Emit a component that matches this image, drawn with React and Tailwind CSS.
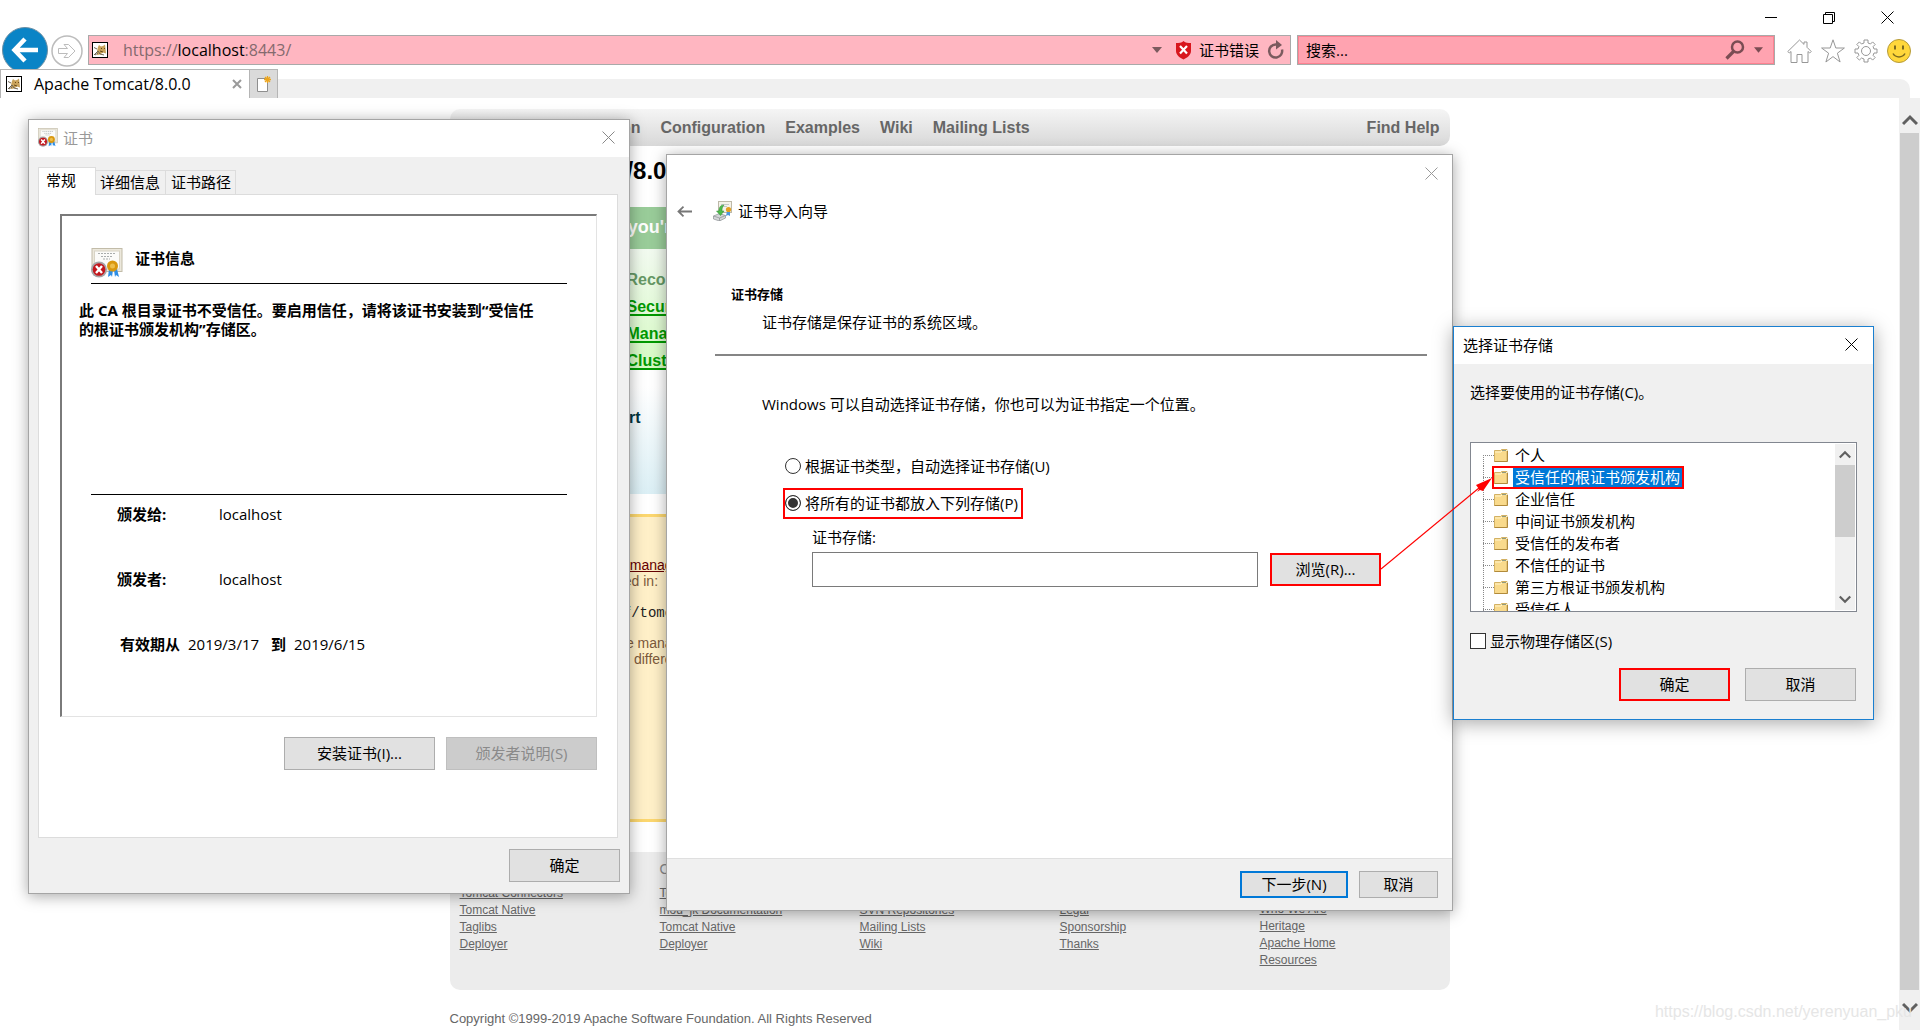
const uiFont = "font-['Open_Sans','Noto_Sans_CJK_SC',sans-serif]";
const pageFont = "font-['Liberation_Sans',sans-serif]";

const stores = [
    '个人',
    '受信任的根证书颁发机构',
    '企业信任',
    '中间证书颁发机构',
    '受信任的发布者',
    '不信任的证书',
    '第三方根证书颁发机构',
    '受信任人',
];

const footerColumns = [
    { title: 'Other Downloads', links: ['Tomcat Connectors', 'Tomcat Native', 'Taglibs', 'Deployer'] },
    { title: 'Other Documentation', links: ['Tomcat Connectors', 'mod_jk Documentation', 'Tomcat Native', 'Deployer'] },
    { title: 'Get Involved', links: ['Overview', 'SVN Repositories', 'Mailing Lists', 'Wiki'] },
    { title: 'Miscellaneous', links: ['Contact', 'Legal', 'Sponsorship', 'Thanks'] },
    { title: 'Apache Software Foundation', links: ['Who We Are', 'Heritage', 'Apache Home', 'Resources'] },
];

function TomcatIcon() {
    return (
        <svg className="h-4 w-4 shrink-0" viewBox="0 0 16 16" aria-hidden="true">
            <rect x="0.5" y="0.5" width="15" height="15" fill="#fff" stroke="#000" />
            <path d="M5 9l1-4 1-2 2 1.500 2-.5 2-1.500.5 4 .5 5-3-1-3 2-3 .5z" fill="#c9a25a" />
            <path d="M2 5.500l3 1.500M2 13l4-4 2 3 4 1M6 11l-3 2" fill="none" stroke="#6d6455" />
            <path d="M9 6.500h1M12 6.500h1M8 9l3 1" stroke="#6b4a18" fill="none" />
        </svg>
    );
}

function CloseIcon({ className }) {
    return (
        <svg className={className} viewBox="0 0 13 13" aria-hidden="true">
            <path d="M0.5 0.5l12 12M12.5 0.5l-12 12" stroke="currentColor" fill="none" />
        </svg>
    );
}

function CertErrorIcon({ className }) {
    return (
        <svg className={className} viewBox="0 0 32 30" preserveAspectRatio="none" aria-hidden="true">
            <rect x="1" y="0.5" width="30" height="23" fill="#ece8dc" stroke="#c2bca9" />
            <rect x="3.5" y="3" width="25" height="18" fill="#fbfbf9" stroke="#d8d4c6" />
            <path d="M7 5.5h18M10 8.500h11M12 11h7" stroke="#a9adad" strokeDasharray="2 1" />
            <path d="M18 21l-1 8 3-2 1 2 1-7M23 22l1 7 1-2 3 2-2-8" fill="#2e8ee6" />
            <circle cx="21.5" cy="18" r="5.5" fill="#d9980f" />
            <circle cx="21.5" cy="18" r="2.5" fill="#eebf4b" />
            <circle cx="8" cy="21.5" r="8" fill="#a5a5a8" />
            <circle cx="8" cy="21.5" r="6.3" fill="#c4161c" />
            <path d="M5 18l6 7M11 18l-6 7" stroke="#fff" strokeWidth="2.4" />
        </svg>
    );
}

function CertImportIcon() {
    return (
        <svg className="h-5 w-5" viewBox="0 0 20 20" aria-hidden="true">
            <rect x="5.5" y="0.5" width="13" height="11" fill="#f4f2ea" stroke="#bdb9a8" />
            <path d="M8 3.5h8M9 5.5h5" stroke="#c5c8c8" />
            <path d="M14 10l-1 5 2-1 2 1v-5" fill="#4b97dc" />
            <circle cx="15.5" cy="8.5" r="2.6" fill="#e3a021" />
            <path d="M0.500 15l6-2.500 6 2v2.500l-6 3-6-2z" fill="#d3d6d8" stroke="#8b8f92" strokeWidth="0.7" />
            <path d="M0.500 15l6 2 6-2.500M6.500 17v3" stroke="#8b8f92" strokeWidth="0.7" fill="none" />
            <path d="M11 4c-4 0-5 3-5 6H3.500l4 4.500 3.500-4.500H9c0-2 0-4 2-6z" fill="#4dbb4a" stroke="#2f8b34" strokeWidth="0.5" />
        </svg>
    );
}

function FolderIcon() {
    return (
        <svg className="h-[13px] w-[14px] shrink-0" viewBox="0 0 14 13" aria-hidden="true">
            <path d="M0.5 1.5h6l1-1h5.5v12H0.5z" fill="#f9da8c" stroke="#d3b163" />
            <path d="M1 3h6l1.5-1.5H13" stroke="#fff3c9" fill="none" />
            <path d="M8 1.5h4" stroke="#8f9a80" />
            <path d="M0.5 12.5H13.5V2" stroke="#b18a3b" fill="none" />
        </svg>
    );
}

function Chevron({ up, className }) {
    return (
        <svg className={className} viewBox="0 0 16 12" aria-hidden="true">
            <path d={up ? 'M1 10l7-7 7 7' : 'M1 2l7 7 7-7'} stroke="#606060" strokeWidth="3" fill="none" />
        </svg>
    );
}

function DialogButton({ children, className = '', tone = 'border border-[#adadad] bg-[#e1e1e1]', ...props }) {
    return (
        <button type="button" className={`flex items-center justify-center pb-[2px] text-[15px] leading-5 ${tone} ${className}`} {...props}>
            {children}
        </button>
    );
}

function BrowserBar() {
    return (
        <header className={uiFont}>
            <div className="flex h-[35px] items-center justify-end gap-[46px] pr-[26px]">
                <button type="button" aria-label="最小化">
                    <svg className="w-3 h-3" viewBox="0 0 12 12"><path d="M0 5.5h12" stroke="#000" /></svg>
                </button>
                <button type="button" aria-label="还原">
                    <svg className="w-3 h-3" viewBox="0 0 12 12">
                        <path d="M0.5 2.5h9v9h-9zM2.5 2.5v-2h9v9h-2" fill="none" stroke="#000" />
                    </svg>
                </button>
                <button type="button" aria-label="关闭"><CloseIcon className="w-[13px] h-[13px] text-black" /></button>
            </div>
            <div className="flex h-[34px] items-start">
                <button type="button" aria-label="后退" className="ml-[2px] h-[34px] w-[46px] shrink-0">
                    <svg className="-mt-2 h-[46px] w-[46px]" viewBox="0 0 46 46">
                        <circle cx="23" cy="23" r="22.5" fill="#0a84c6" stroke="#6b8ea3" />
                        <path d="M36 23H13M23 12L12.500 23l10.500 11" fill="none" stroke="#fff" strokeWidth="4.500" />
                    </svg>
                </button>
                <button type="button" aria-label="前进" className="ml-[3px] h-8 w-8 shrink-0">
                    <svg className="h-8 w-8" viewBox="0 0 32 32">
                        <circle cx="16" cy="16" r="15" fill="#fff" stroke="#bcbcbc" strokeWidth="1.500" />
                        <path d="M7.500 13.500h9l-3.500-4h4.500l6.500 6.500-6.500 6.500H13l3.500-4h-9z" fill="#fff" stroke="#bcbcbc" />
                    </svg>
                </button>
                <div className="ml-[5px] flex h-[30px] flex-1 items-center border border-[#a9a9a9] bg-[#ffb6c1] pl-[3px] pr-[6px]">
                    <TomcatIcon />
                    <div role="textbox" aria-label="地址" className="ml-[15px] flex-1 text-base leading-5 text-[#846a6e]">
                        https://<span className="text-black">localhost</span>:8443/
                    </div>
                    <svg className="h-[6px] w-[10px]" viewBox="0 0 10 6"><path d="M0 0h10L5 6z" fill="#7b5a5e" /></svg>
                    <svg className="ml-[13px] h-5 w-[17px]" viewBox="0 0 17 20">
                        <path d="M8.500 1c2 2 4.500 2 7.500 2v8c0 4-4 7-7.500 8.500C5 18 1 15 1 11V3c3 0 5.500 0 7.500-2z" fill="#d8161d" />
                        <path d="M5 6l7 7.500M12 6l-7 7.500" stroke="#fff" strokeWidth="2.200" />
                    </svg>
                    <span className="ml-[7px] text-[15px] leading-5">证书错误</span>
                    <button type="button" aria-label="刷新" className="ml-2">
                        <svg className="h-5 w-[17px]" viewBox="0 0 17 20">
                            <path d="M10 4.500H8.500a6.500 6.500 0 1 0 6.500 5" fill="none" stroke="#7b5a5e" strokeWidth="2.500" />
                            <path d="M9 0l6 5-6 4.500z" fill="#7b5a5e" />
                        </svg>
                    </button>
                </div>
                <div className="ml-[6px] flex h-[30px] w-[478px] items-center border border-[#a9a9a9] bg-[#ffa3b0] pl-2 pr-[11px] ring-1 ring-inset ring-[#fd8291]">
                    <input aria-label="搜索" placeholder="搜索..." className="min-w-0 flex-1 bg-transparent text-[15px] leading-5 outline-none placeholder:text-black" />
                    <svg className="h-5 w-5" viewBox="0 0 20 20">
                        <circle cx="12.500" cy="7" r="5.500" fill="none" stroke="#7b4c53" strokeWidth="2.500" />
                        <path d="M8.500 11.500L1.500 18.500" stroke="#7b4c53" strokeWidth="3.200" />
                    </svg>
                    <svg className="ml-[9px] h-[6px] w-[9px]" viewBox="0 0 10 6"><path d="M0 0h10L5 6z" fill="#7b4c53" /></svg>
                </div>
                <div className="flex items-center gap-[9px] pl-3 pr-[9px] pt-1">
                    <svg className="h-6 w-[25px]" viewBox="0 0 25 24" fill="#fff" stroke="#979797">
                        <path d="M12.500 1L0.800 12.500l1.500 1.500L4 12.500v11h6v-8h5v8h6v-11l1.700 1.500 1.500-1.500L20 8.300V3h-3v2.400z" />
                    </svg>
                    <svg className="h-6 w-6" viewBox="0 0 24 24" fill="#fff" stroke="#979797">
                        <path d="M12 0.800l2.800 8.200h8.600l-7 5.200 2.700 8.800-7.100-5.400L4.900 23l2.700-8.800-7-5.200h8.600z" />
                    </svg>
                    <svg className="h-6 w-6" viewBox="0 0 24 24" fill="#fff" stroke="#979797">
                        <path d="M10 1h4v3l2.500 1 2.100-2.100 2.600 2.600L19.100 7.600 20 10h3v4h-3l-.9 2.400 2.100 2.100-2.600 2.600-2.100-2.100L14 20v3h-4v-3l-2.500-1-2.100 2.100-2.600-2.600 2.100-2.100L4 14H1v-4h3l.9-2.400-2.100-2.100 2.600-2.600L7.500 5 10 4z" />
                        <circle cx="12" cy="12" r="4.500" />
                    </svg>
                    <svg className="h-6 w-6" viewBox="0 0 24 24">
                        <circle cx="12" cy="12" r="11.500" fill="#ffd73b" stroke="#b59a3a" />
                        <path d="M8 6.500v4M16 6.500v4" stroke="#7d6a1e" strokeWidth="2" />
                        <path d="M6 14.500c2.500 4.500 9.500 4.500 12 0" fill="none" stroke="#7d6a1e" strokeWidth="1.500" />
                    </svg>
                </div>
            </div>
            <div className="flex h-[29px] items-end pr-[10px]">
                <div className="relative flex h-[29px] w-[249px] items-center border-l border-t border-[#b5b5b5] bg-white pl-[5px] pr-[7px]">
                    <TomcatIcon />
                    <span className="ml-3 flex-1 text-base leading-5">Apache Tomcat/8.0.0</span>
                    <button type="button" aria-label="关闭标签页">
                        <svg className="h-[10px] w-[10px]" viewBox="0 0 10 10"><path d="M1 1l8 8M9 1L1 9" stroke="#9a9a9a" strokeWidth="2" /></svg>
                    </button>
                </div>
                <button type="button" aria-label="新建标签页" className="flex h-[29px] w-[29px] items-center justify-center border border-b-0 border-[#b5b5b5] bg-[#dadada]">
                    <svg className="h-4 w-4" viewBox="0 0 16 16">
                        <path d="M1.500 2.500h8l2 3v10h-10z" fill="#fff" stroke="#8e8e8e" />
                        <path d="M11.500 0v7M8 3.500h7M9 1l5 5M14 1L9 6" stroke="#eda51b" strokeWidth="1.300" />
                    </svg>
                </button>
                <div className="h-[19px] flex-1 rounded-tr-[10px] bg-[#f0f0f0]" />
            </div>
        </header>
    );
}

function TomcatPage() {
    return (
        <main className={`${pageFont} mx-auto w-full max-w-[1000px] pt-[11px]`}>
            <nav className="flex h-[37px] items-center gap-5 rounded-[10px] bg-gradient-to-b from-[#f5f5f5] to-[#d8d8d8] px-[10px] text-base font-bold leading-5 text-[#666]">
                <a href="#home">Home</a>
                <a href="#docs">Documentation</a>
                <a href="#config">Configuration</a>
                <a href="#examples">Examples</a>
                <a href="#wiki">Wiki</a>
                <a href="#lists">Mailing Lists</a>
                <a href="#help" className="ml-auto">Find Help</a>
            </nav>
            <h1 className="mt-[11px] text-2xl font-bold leading-7">Apache Tomcat/8.0.0</h1>
            <h2 className="mt-[22px] h-[42px] bg-[#99cc99] pr-7 text-center text-lg font-bold leading-[40px] text-white">
                If you're seeing this, you've successfully installed Tomcat. Congratulations!
            </h2>
            <section className="h-[121px] bg-gradient-to-b from-[#f2faf0] to-[#d5fac2] pl-[177px] pt-[17px] text-base font-bold leading-[27px] text-[#090]">
                <h3 className="text-[#696]">Recommended Reading:</h3>
                <ul className="underline decoration-2 underline-offset-2">
                    <li><a href="#security">Security Considerations HOW-TO</a></li>
                    <li><a href="#manager">Manager Application HOW-TO</a></li>
                    <li><a href="#cluster">Clustering/Session Replication HOW-TO</a></li>
                </ul>
            </section>
            <section className="mt-4 h-[108px] bg-gradient-to-b from-white to-[#dbeff5] pl-6 pt-[22px]">
                <h3 className="text-base font-bold leading-5 text-[#033540]">Developer Quick Start</h3>
            </section>
            <section className="mt-5 h-[308px] border-y-[3px] border-[#fcd76f] bg-[#fff0c8] px-[14px] pt-10 text-sm leading-4 text-[#7d5a3c]">
                <div className="w-[310px]">
                    <p>
                        For security, access to the <a href="#webapp" className="text-[#600] underline">manager webapp</a> is restricted. Users are defined in:
                    </p>
                    <pre className="mt-4 pl-2 font-['Liberation_Mono',monospace] text-sm leading-4 text-[#222]">$CATALINA_HOME/conf/tomcat-users.xml</pre>
                    <p className="mt-[14px] w-[250px]">In Tomcat 8.0 access to the manager application is split between different users.</p>
                </div>
            </section>
            <footer>
                <div className="mt-[30px] grid h-[138px] grid-cols-5 rounded-b-[10px] bg-[#ececec] pt-[9px] text-xs text-[#666]">
                    {footerColumns.map(({ title, links }) => (
                        <div key={title} className="pl-[10px] pr-5">
                            <h4 className="text-sm leading-4 text-[#888]">{title}</h4>
                            <ul className="mt-2 leading-[17px] underline">
                                {links.map((link) => (
                                    <li key={link}><a href="#footer">{link}</a></li>
                                ))}
                            </ul>
                        </div>
                    ))}
                </div>
                <p className="mt-[21px] text-[13px] leading-4 text-[#666]">Copyright ©1999-2019 Apache Software Foundation. All Rights Reserved</p>
            </footer>
        </main>
    );
}

function CertificateDialog() {
    return (
        <section role="dialog" aria-label="证书" className={`${uiFont} absolute left-[28px] top-[119px] flex h-[775px] w-[602px] flex-col border border-[#a5a5a5] bg-[#f0f0f0] text-[15px] leading-5 shadow-[0_2px_14px_rgba(0,0,0,0.35)]`}>
            <div className="flex h-[37px] items-center bg-white pb-[2px] pl-[9px] pr-[14px]">
                <CertErrorIcon className="h-[19px] w-5" />
                <h2 className="ml-[5px] flex-1 text-[#999]">证书</h2>
                <button type="button" aria-label="关闭"><CloseIcon className="h-[13px] w-[13px] text-[#888]" /></button>
            </div>
            <div className="flex flex-1 flex-col pb-[11px] pl-[9px] pr-[9px] pt-[10px]">
                <div role="tablist" className="flex h-[28px] items-end">
                    <button role="tab" aria-selected="true" type="button" className="z-10 h-[28px] w-[58px] border border-b-0 border-[#dcdcdc] bg-white pb-1 pl-[7px] text-left">常规</button>
                    <button role="tab" aria-selected="false" type="button" className="h-[25px] w-[70px] whitespace-nowrap border border-b-0 border-l-0 border-[#dcdcdc] pb-[2px] pl-1 text-left">详细信息</button>
                    <button role="tab" aria-selected="false" type="button" className="h-[25px] w-[70px] whitespace-nowrap border border-b-0 border-l-0 border-[#dcdcdc] pb-[2px] pl-[5px] text-left">证书路径</button>
                </div>
                <div role="tabpanel" className="-mt-px mr-[2px] flex-1 border border-[#dcdcdc] bg-white pl-[21px] pr-5 pt-[19px]">
                    <div className="h-[503px] border-b border-l-2 border-r border-t-2 border-b-[#e3e3e3] border-l-[#7a7a7a] border-r-[#e3e3e3] border-t-[#7a7a7a] pt-8">
                        <div className="mx-[29px] flex h-9 items-start gap-3 border-b border-black">
                            <CertErrorIcon className="h-[30px] w-8" />
                            <h3 className="font-bold">证书信息</h3>
                        </div>
                        <p className="ml-[17px] mt-[17px] w-[470px] font-bold leading-[19px]">
                            此 CA 根目录证书不受信任。要启用信任，请将该证书安装到“受信任<br />的根证书颁发机构”存储区。
                        </p>
                        <hr className="mx-[29px] mt-[155px] border-black" />
                        <dl className="mt-[9px] flex flex-col gap-[45px] pl-[55px]">
                            <div className="flex"><dt className="w-[102px] font-bold">颁发给:</dt><dd>localhost</dd></div>
                            <div className="flex"><dt className="w-[102px] font-bold">颁发者:</dt><dd>localhost</dd></div>
                            <div className="flex gap-2 pl-[3px]">
                                <dt className="font-bold">有效期从</dt>
                                <dd className="w-[75px]">2019/3/17</dd>
                                <dt className="font-bold">到</dt>
                                <dd>2019/6/15</dd>
                            </div>
                        </dl>
                    </div>
                    <div className="mt-5 flex justify-end gap-[11px]">
                        <DialogButton className="h-[33px] w-[151px]">安装证书(I)...</DialogButton>
                        <DialogButton disabled tone="border border-[#bfbfbf] bg-[#ccc] text-[#8a8a8a]" className="h-[33px] w-[151px]">颁发者说明(S)</DialogButton>
                    </div>
                </div>
                <div className="flex justify-end pt-[11px]">
                    <DialogButton className="h-[33px] w-[111px]">确定</DialogButton>
                </div>
            </div>
        </section>
    );
}

function RadioOption({ label, defaultChecked }) {
    return (
        <label className="flex items-center gap-1 whitespace-nowrap">
            <input
                type="radio"
                name="store-mode"
                defaultChecked={defaultChecked}
                className="h-4 w-4 appearance-none rounded-full border border-[#333] bg-white checked:bg-[#333] checked:ring-2 checked:ring-inset checked:ring-white"
            />
            {label}
        </label>
    );
}

function ImportWizard() {
    return (
        <section role="dialog" aria-label="证书导入向导" className={`${uiFont} absolute left-[666px] top-[154px] flex h-[757px] w-[787px] flex-col border border-[#a5a5a5] bg-white text-[15px] leading-5 shadow-[0_2px_14px_rgba(0,0,0,0.35)]`}>
            <div className="flex h-9 items-center justify-end pr-[14px]">
                <button type="button" aria-label="关闭"><CloseIcon className="h-[13px] w-[13px] text-[#999]" /></button>
            </div>
            <div className="flex h-10 items-center pl-[10px]">
                <button type="button" aria-label="上一步" className="mr-[21px]">
                    <svg className="h-[11px] w-[15px]" viewBox="0 0 15 11"><path d="M15 5.500H1.500M6.500 0.700L1.500 5.500l5 4.800" fill="none" stroke="#777" strokeWidth="1.800" /></svg>
                </button>
                <CertImportIcon />
                <h2 className="ml-[5px]">证书导入向导</h2>
            </div>
            <h3 className="ml-[64px] mt-[53px] text-[13px] font-bold leading-5">证书存储</h3>
            <p className="ml-[95px] mt-2">证书存储是保存证书的系统区域。</p>
            <hr className="ml-12 mr-[25px] mt-[22px] border-t-2 border-[#858585]" />
            <p className="ml-[95px] mt-[38px]">Windows 可以自动选择证书存储，你也可以为证书指定一个位置。</p>
            <div className="ml-[118px] mt-[42px]">
                <RadioOption label="根据证书类型，自动选择证书存储(U)" />
            </div>
            <div className="ml-[116px] mt-3 flex h-[31px] w-[240px] items-center border-2 border-[#f00] pb-px">
                <RadioOption label="将所有的证书都放入下列存储(P)" defaultChecked />
            </div>
            <div className="ml-[145px] mt-2">
                <label htmlFor="store-name" className="block">证书存储:</label>
                <div className="mt-[5px] flex items-center gap-3">
                    <input id="store-name" className="h-[35px] w-[446px] border border-[#7a7a7a] bg-white px-1" />
                    <DialogButton tone="border-2 border-[#f00] bg-[#e1e1e1]" className="h-[33px] w-[111px]">浏览(R)...</DialogButton>
                </div>
            </div>
            <div className="mt-auto flex h-[52px] items-start justify-end gap-[11px] border-t border-[#dfdfdf] bg-[#f0f0f0] pr-[14px] pt-3">
                <DialogButton tone="border-2 border-[#0078d7] bg-[#e1e1e1]" className="h-[27px] w-[108px]">下一步(N)</DialogButton>
                <DialogButton className="h-[27px] w-[79px]">取消</DialogButton>
            </div>
        </section>
    );
}

function StoreItem({ name, selected, first }) {
    return (
        <li className="flex h-[22px] items-center" role="treeitem" aria-selected={selected}>
            <svg className="h-[22px] w-[11px] shrink-0" viewBox="0 0 11 22" aria-hidden="true">
                <path d={first ? 'M0.5 11V22M0 11.5H11' : 'M0.5 0V22M0 11.5H11'} stroke="#888" strokeDasharray="1 1" fill="none" />
            </svg>
            <span className={`flex h-[19px] items-center gap-[5px] ${selected ? 'outline-2 outline-[#f00]' : ''}`}>
                <FolderIcon />
                <span className={`px-[2px] leading-[19px] ${selected ? 'bg-[#0078d7] text-white' : ''}`}>{name}</span>
            </span>
        </li>
    );
}

function StorePicker() {
    return (
        <section role="dialog" aria-label="选择证书存储" className={`${uiFont} absolute left-[1453px] top-[326px] h-[394px] w-[421px] border border-[#1a7fd0] bg-[#f0f0f0] text-[15px] leading-5 shadow-[0_3px_18px_rgba(0,0,0,0.35)]`}>
            <div className="flex h-[37px] items-center justify-between bg-white pb-[2px] pl-[9px] pr-[15px]">
                <h2>选择证书存储</h2>
                <button type="button" aria-label="关闭"><CloseIcon className="h-[13px] w-[13px] text-black" /></button>
            </div>
            <div className="pl-4 pr-[16px] pt-[18px]">
                <p>选择要使用的证书存储(C)。</p>
                <div className="mt-10 flex h-[170px] overflow-hidden border border-[#828790] bg-white">
                    <ul role="tree" className="flex-1 pl-3 pt-px">
                        {stores.map((name, i) => (
                            <StoreItem key={name} name={name} first={i === 0} selected={i === 1} />
                        ))}
                    </ul>
                    <div className="m-px flex w-5 flex-col items-center bg-[#f0f0f0]">
                        <Chevron up className="my-[6px] h-[9px] w-3" />
                        <div className="h-[72px] w-full bg-[#cdcdcd]" />
                        <Chevron className="mb-[6px] mt-auto h-[9px] w-3" />
                    </div>
                </div>
                <label className="mt-[19px] flex items-center gap-1">
                    <input type="checkbox" className="h-4 w-4 appearance-none border border-[#333] bg-white" />
                    显示物理存储区(S)
                </label>
                <div className="mt-[17px] flex justify-end gap-[15px] pr-px">
                    <DialogButton tone="border-2 border-[#f00] bg-[#e1e1e1]" className="h-[33px] w-[111px]">确定</DialogButton>
                    <DialogButton className="h-[33px] w-[111px]">取消</DialogButton>
                </div>
            </div>
        </section>
    );
}

export default function App() {
    return (
        <div className="relative flex h-screen flex-col overflow-hidden bg-white text-black">
            <BrowserBar />
            <div className="flex min-h-0 flex-1">
                <div className="flex-1 overflow-hidden">
                    <TomcatPage />
                </div>
                <div className="flex w-[21px] flex-col items-center bg-[#f0f0f0]">
                    <Chevron up className="mb-[7px] mt-4 h-3 w-4" />
                    <div className="w-[19px] flex-1 bg-[#cdcdcd]" />
                    <Chevron className="mb-4 mt-3 h-3 w-4" />
                </div>
            </div>
            <CertificateDialog />
            <ImportWizard />
            <StorePicker />
            {/* callout from the browse button to the trusted root store */}
            <svg className="pointer-events-none absolute left-[1381px] top-[476px] h-[94px] w-[111px]" viewBox="0 0 111 94" aria-hidden="true">
                <path d="M0 93L104 7" stroke="#f00" strokeWidth="1.200" />
                <path d="M111 2L95 9l3 4-2 3 3-2 3 1z" fill="#f00" />
            </svg>
            <span className={`${pageFont} pointer-events-none absolute bottom-2 right-2 text-base leading-5 text-[#e6e6e6]`}>
                https://blog.csdn.net/yerenyuan_pku
            </span>
        </div>
    );
}
